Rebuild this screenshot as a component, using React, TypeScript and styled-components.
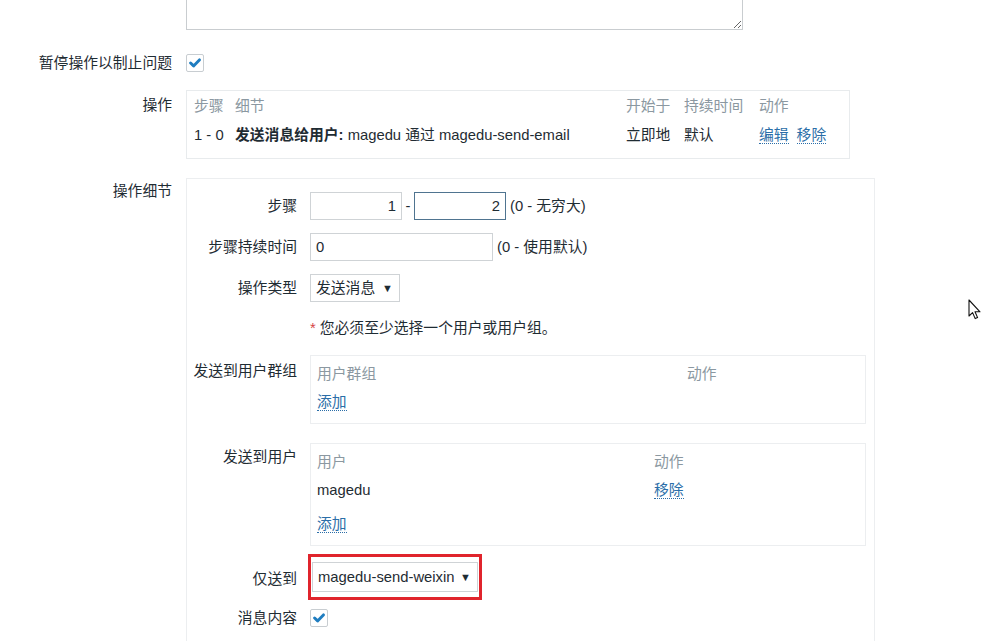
import React from "react";
import styled, { createGlobalStyle } from "styled-components";

const Global = createGlobalStyle`
  html, body { margin: 0; padding: 0; background: #ffffff; }
  body {
    font-family: "Liberation Sans", Arial, "Noto Sans CJK SC", sans-serif;
    font-size: 14.8px;
    color: #1f2c33;
    overflow: hidden;
  }
`;

const Page = styled.div`
  position: relative;
  width: 993px;
  height: 641px;
  overflow: hidden;
`;

const Row = styled.div<{ $mt?: number }>`
  display: grid;
  grid-template-columns: 172px 1fr;
  column-gap: 14px;
  margin-top: ${(p) => p.$mt ?? 0}px;
`;

const Label = styled.div<{ $pt?: number }>`
  text-align: right;
  line-height: 18px;
  padding-top: ${(p) => p.$pt ?? 0}px;
  white-space: nowrap;
`;

const TextArea = styled.textarea`
  display: block;
  box-sizing: border-box;
  width: 557px;
  height: 42px;
  border: 1px solid #c9cdd0;
  resize: both;
  font: inherit;
`;

const Check = styled.span`
  display: inline-flex;
  align-items: center;
  justify-content: center;
  box-sizing: border-box;
  width: 18px;
  height: 18px;
  border: 1px solid #c8cdd1;
  border-radius: 2px;
  background: #fff;
`;

const CheckBox = () => (
  <Check>
    <svg width="12" height="10" viewBox="0 0 12 10">
      <path d="M1.6 5 L4.6 7.9 L10.4 1.9" fill="none" stroke="#1f7dc0" strokeWidth="2.9" strokeLinecap="round" strokeLinejoin="round" />
    </svg>
  </Check>
);

const OpsBox = styled.div`
  box-sizing: border-box;
  width: 664px;
  border: 1px solid #e8ebed;
  padding: 6px 7px 14px;
  display: grid;
  grid-template-columns: 41px 391px 58px 75px auto;
  row-gap: 11px;
  line-height: 18px;
`;

const Head = styled.div`
  color: #8b98a1;
  white-space: nowrap;
`;

const Cell = styled.div`
  white-space: nowrap;
`;

const Strong = styled.b`
  font-weight: bold;
`;

const Link = styled.a`
  color: #2b6ea8;
  text-decoration: none;
  border-bottom: 1px dotted #2b6ea8;
  cursor: pointer;
  margin-right: 8px;
`;

const DetailsBox = styled.div`
  box-sizing: border-box;
  width: 689px;
  height: 500px;
  border: 1px solid #eceef0;
  border-bottom: none;
  padding: 13px 8px 0 0;
`;

const SubRow = styled.div<{ $mt?: number }>`
  display: grid;
  grid-template-columns: 110px 1fr;
  column-gap: 13px;
  align-items: start;
  margin-top: ${(p) => p.$mt ?? 0}px;
`;

const SubLabel = styled.div<{ $pt?: number }>`
  text-align: right;
  line-height: 18px;
  padding-top: ${(p) => p.$pt ?? 5}px;
  white-space: nowrap;
`;

const Inline = styled.div`
  display: flex;
  align-items: center;
  height: 28px;
  line-height: 18px;
`;

const Input = styled.div<{ $w: number; $right?: boolean; $focus?: boolean }>`
  box-sizing: border-box;
  width: ${(p) => p.$w}px;
  height: 28px;
  border: 1px solid ${(p) => (p.$focus ? "#4f7490" : "#cfd3d6")};
  background: #fff;
  padding: 0 5px;
  display: flex;
  align-items: center;
  justify-content: ${(p) => (p.$right ? "flex-end" : "flex-start")};
`;

const Dash = styled.span`
  width: 12px;
  text-align: center;
`;

const Hint = styled.span`
  margin-left: 4px;
`;

const Select = styled.div<{ $w: number; $h?: number }>`
  box-sizing: border-box;
  width: ${(p) => p.$w}px;
  height: ${(p) => p.$h ?? 28}px;
  border: 1px solid #cfd3d6;
  background: #fff;
  padding: 0 6px 0 5px;
  display: flex;
  align-items: center;
  justify-content: space-between;
  white-space: nowrap;
`;

const Arrow = styled.span`
  font-size: 11px;
  color: #1f2c33;
`;

const Required = styled.div`
  line-height: 18px;
`;

const Star = styled.span`
  color: #d64545;
  margin-right: 4px;
`;

const ListBox = styled.div`
  box-sizing: border-box;
  width: 556px;
  border: 1px solid #eceef0;
  padding: 9px 6px 12px;
  line-height: 18px;
`;

const ListGrid = styled.div<{ $cols: string }>`
  display: grid;
  grid-template-columns: ${(p) => p.$cols};
  row-gap: 10px;
`;

const AddRow = styled.div<{ $mt: number }>`
  margin-top: ${(p) => p.$mt}px;
`;

const Highlight = styled.div`
  margin-left: -2px;
  width: 174px;
  box-sizing: border-box;
  border: 3px solid #e0242c;
  padding: 5px 1px;
`;

const Cursor = styled.svg`
  position: absolute;
  left: 968px;
  top: 299px;
`;

export default function App() {
  return (
    <Page>
      <Global />
      <Row $mt={-12}>
        <div />
        <TextArea defaultValue="" />
      </Row>
      <Row $mt={24}>
        <Label>暂停操作以制止问题</Label>
        <div>
          <CheckBox />
        </div>
      </Row>
      <Row $mt={18}>
        <Label $pt={6}>操作</Label>
        <OpsBox>
          <Head>步骤</Head>
          <Head>细节</Head>
          <Head>开始于</Head>
          <Head>持续时间</Head>
          <Head>动作</Head>
          <Cell>1 - 0</Cell>
          <Cell>
            <Strong>发送消息给用户:</Strong> magedu 通过 magedu-send-email
          </Cell>
          <Cell>立即地</Cell>
          <Cell>默认</Cell>
          <Cell>
            <Link>编辑</Link>
            <Link>移除</Link>
          </Cell>
        </OpsBox>
      </Row>
      <Row $mt={19}>
        <Label $pt={4}>操作细节</Label>
        <DetailsBox>
          <SubRow>
            <SubLabel>步骤</SubLabel>
            <Inline>
              <Input $w={92} $right>1</Input>
              <Dash>-</Dash>
              <Input $w={92} $right $focus>2</Input>
              <Hint>(0 - 无穷大)</Hint>
            </Inline>
          </SubRow>
          <SubRow $mt={13}>
            <SubLabel>步骤持续时间</SubLabel>
            <Inline>
              <Input $w={183}>0</Input>
              <Hint>(0 - 使用默认)</Hint>
            </Inline>
          </SubRow>
          <SubRow $mt={13}>
            <SubLabel>操作类型</SubLabel>
            <Inline>
              <Select $w={90}>
                发送消息 <Arrow>▼</Arrow>
              </Select>
            </Inline>
          </SubRow>
          <SubRow $mt={17}>
            <div />
            <Required>
              <Star>*</Star>您必须至少选择一个用户或用户组。
            </Required>
          </SubRow>
          <SubRow $mt={18}>
            <SubLabel $pt={7}>发送到用户群组</SubLabel>
            <ListBox>
              <ListGrid $cols="370px auto">
                <Head>用户群组</Head>
                <Head>动作</Head>
              </ListGrid>
              <AddRow $mt={10}>
                <Link>添加</Link>
              </AddRow>
            </ListBox>
          </SubRow>
          <SubRow $mt={19}>
            <SubLabel $pt={5}>发送到用户</SubLabel>
            <ListBox>
              <ListGrid $cols="337px auto">
                <Head>用户</Head>
                <Head>动作</Head>
                <Cell>magedu</Cell>
                <Cell>
                  <Link>移除</Link>
                </Cell>
              </ListGrid>
              <AddRow $mt={16}>
                <Link>添加</Link>
              </AddRow>
            </ListBox>
          </SubRow>
          <SubRow $mt={8}>
            <SubLabel $pt={16}>仅送到</SubLabel>
            <Highlight>
              <Select $w={166} $h={30}>
                magedu-send-weixin <Arrow>▼</Arrow>
              </Select>
            </Highlight>
          </SubRow>
          <SubRow $mt={9}>
            <SubLabel $pt={0}>消息内容</SubLabel>
            <div>
              <CheckBox />
            </div>
          </SubRow>
        </DetailsBox>
      </Row>
      <Cursor width="14" height="21" viewBox="0 0 14 21">
        <path d="M1 1 L1 17 L4.6 13.6 L7.2 19.6 L9.6 18.6 L7 12.8 L12 12.8 Z" fill="#fff" stroke="#111" strokeWidth="1.1" strokeLinejoin="round" />
      </Cursor>
    </Page>
  );
}
